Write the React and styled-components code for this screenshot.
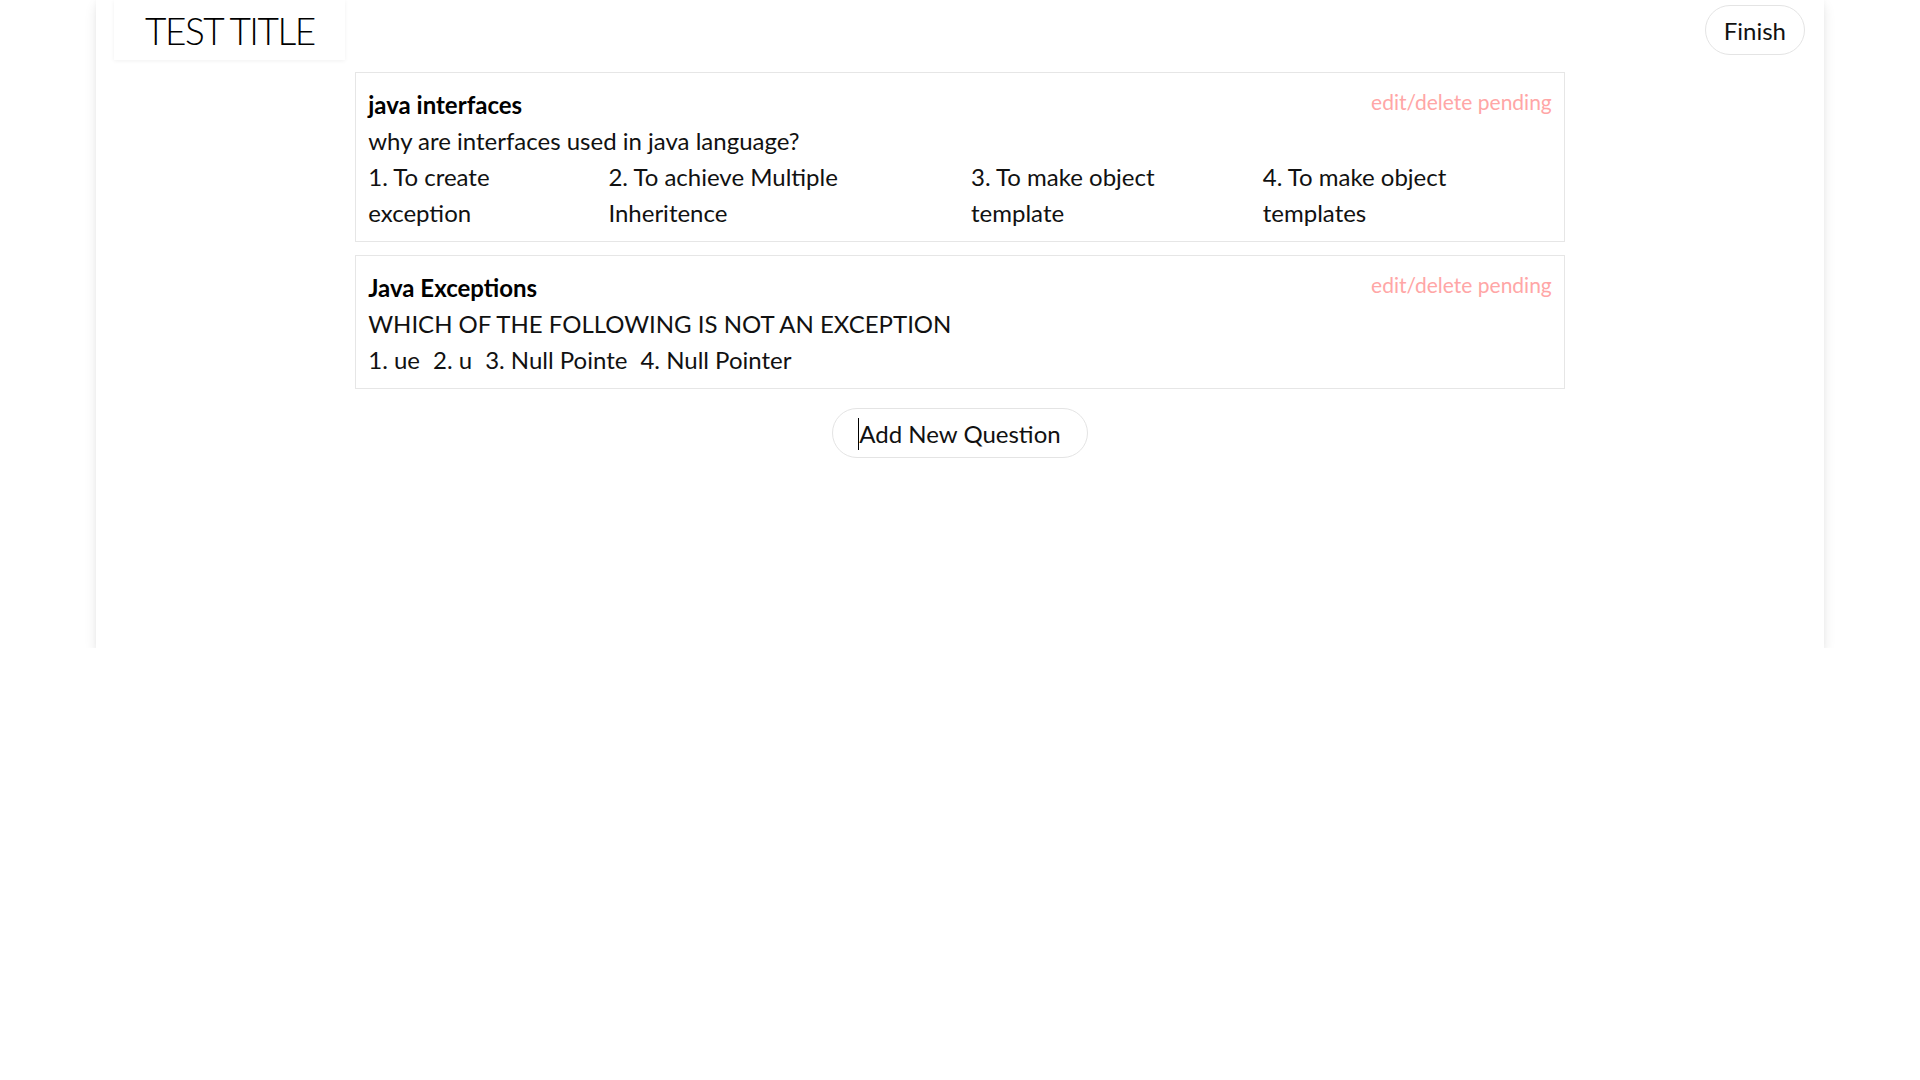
import React from "react";
import styled, { createGlobalStyle } from "styled-components";

const GlobalStyle = createGlobalStyle`
  html, body {
    margin: 0;
    padding: 0;
    background: #ffffff;
  }
  body {
    font-family: "Lato", "Open Sans", sans-serif;
    font-size: 24px;
    line-height: 1.5;
    color: #111111;
  }
  * { box-sizing: border-box; }
`;

const Page = styled.div`
  width: 90%;
  min-height: 60vh;
  margin: 0 auto;
  background: #ffffff;
  box-shadow: 0 6px 12px rgba(0, 0, 0, 0.09), 0 0 5px rgba(0, 0, 0, 0.04);
  display: flex;
  flex-direction: column;
`;

const Header = styled.header`
  display: flex;
  justify-content: space-between;
  align-items: flex-start;
  padding: 0 19px 0 18px;
`;

const TitleBox = styled.h1`
  margin: 0;
  padding: 1px 30px 0 31px;
  font-size: 37px;
  font-weight: 300;
  letter-spacing: -1.5px;
  line-height: 59px;
  color: #000;
  background: #fff;
  box-shadow: 0 1px 4px rgba(0, 0, 0, 0.06);
`;

const PillButton = styled.button`
  position: relative;
  font-family: inherit;
  font-size: 24px;
  line-height: 36px;
  color: #111;
  background: #fff;
  border: 1px solid #e4e4e4;
  border-radius: 999px;
  padding: 7px ${(p) => p.$padX || 20}px 5px;
  margin-top: ${(p) => p.$top || 0}px;
  cursor: pointer;
`;

const Caret = styled.span`
  position: absolute;
  left: 25px;
  top: 9px;
  width: 1px;
  height: 32px;
  background: #000;
`;

const List = styled.main`
  width: 70%;
  margin: 12px auto 0;
  display: flex;
  flex-direction: column;
  gap: 13px;
`;

const Card = styled.section`
  border: 1px solid #e6e6e6;
  padding: 14px 12px 10px;
  background: #fff;
`;

const CardHead = styled.div`
  display: flex;
  justify-content: space-between;
  align-items: flex-start;
`;

const QTitle = styled.div`
  font-weight: 700;
  color: #000;
`;

const Pending = styled.span`
  font-size: 21px;
  line-height: 30px;
  color: #ffa6a6;
`;

const Question = styled.div``;

const Options = styled.div`
  display: flex;
  gap: 13px;
`;

const Option = styled.span``;

const Footer = styled.div`
  display: flex;
  justify-content: center;
  margin-top: 19px;
`;

const questions = [
  {
    title: "java interfaces",
    text: "why are interfaces used in java language?",
    options: [
      "To create exception",
      "To achieve Multiple Inheritence",
      "To make object template",
      "To make object templates",
    ],
  },
  {
    title: "Java Exceptions",
    text: "WHICH OF THE FOLLOWING IS NOT AN EXCEPTION",
    options: ["ue", "u", "Null Pointe", "Null Pointer"],
  },
];

export default function App() {
  return (
    <>
      <GlobalStyle />
      <Page>
        <Header>
          <TitleBox>TEST TITLE</TitleBox>
          <PillButton $top={5} $padX={18}>Finish</PillButton>
        </Header>
        <List>
          {questions.map((q) => (
            <Card key={q.title}>
              <CardHead>
                <QTitle>{q.title}</QTitle>
                <Pending>edit/delete pending</Pending>
              </CardHead>
              <Question>{q.text}</Question>
              <Options>
                {q.options.map((o, i) => (
                  <Option key={i}>
                    {i + 1}. {o}
                  </Option>
                ))}
              </Options>
            </Card>
          ))}
        </List>
        <Footer>
          <PillButton $padX={26}>
            <Caret />
            Add New Question
          </PillButton>
        </Footer>
      </Page>
    </>
  );
}
